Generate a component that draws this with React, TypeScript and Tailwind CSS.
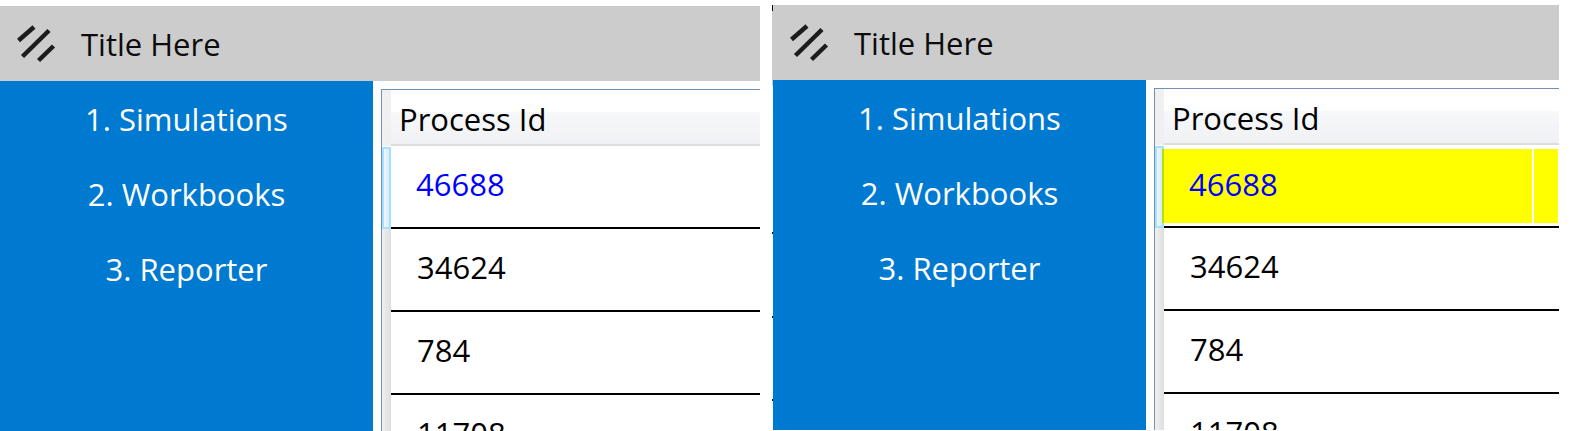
const rows = ['46688', '34624', '784', '11708']
const ticks = [
  { top: 'top-0', height: 'h-[6px]', color: 'bg-black' },
  { top: 'top-[75px]', height: 'h-[6px]', color: 'bg-[#cccccc]' },
  { top: 'top-[227px]', height: 'h-[2px]', color: 'bg-black' },
  { top: 'top-[311px]', height: 'h-[2px]', color: 'bg-black' },
  { top: 'top-[394px]', height: 'h-[2px]', color: 'bg-black' },
]

function TitleIcon() {
  return (
    <svg width="40" height="40" viewBox="0 0 40 40" className="shrink-0">
      <g stroke="#1c1c1c" strokeWidth="4.5" fill="none">
        <path d="M2.5 16.5 L18 3" />
        <path d="M6.5 32.5 L33 6.5" />
        <path d="M22.5 36.5 L37.5 22" />
      </g>
    </svg>
  )
}

function Row({ value, index, highlight }: { value: string; index: number; highlight: boolean }) {
  const first = index === 0
  return (
    <div className="flex h-[83px] shrink-0">
      <div
        className={
          first
            ? 'w-[9px] shrink-0 mt-px border-2 border-[#a6e0ff] bg-gradient-to-r from-[#f4f7fa] to-[#d5ecfb]'
            : 'w-[9px] shrink-0 bg-gradient-to-r from-[#f0f0f0] to-[#dedede]'
        }
      />
      <div className="flex-1 min-w-0 border-b-2 border-black">
        {first && highlight ? (
          <div className="flex h-full pt-[4px] pb-[3px] pr-px -ml-[2px] relative gap-[2px]">
            <div className="w-[370px] shrink-0 bg-[#ffff00] border-l-2 border-[#b8e000] pl-[25px] pb-[4px] flex items-center text-[#0000ff]">
              {value}
            </div>
            <div className="flex-1 bg-[#ffff00]" />
          </div>
        ) : (
          <div className={first ? 'h-full pl-[25px] pb-[4px] flex items-center text-[#0000ff]' : 'h-full pl-[26px] pb-[5px] flex items-center text-black'}>
            {value}
          </div>
        )}
      </div>
    </div>
  )
}

function Panel({ width, top, highlight }: { width: string; top: string; highlight: boolean }) {
  return (
    <div className={`${width} ${top} relative h-[425px] shrink-0 flex flex-col overflow-hidden`}>
      <div className={highlight ? 'h-[75px] shrink-0 bg-[#cccccc] flex items-center pl-[17px] gap-[25px]' : 'h-[75px] shrink-0 bg-[#cccccc] flex items-center pl-[16px] gap-[25px]'}>
        <TitleIcon />
        <span className="text-[#0c0c0c] pt-[1px]">Title Here</span>
      </div>
      <div className={highlight ? 'flex-1 min-h-0 flex pl-px' : 'flex-1 min-h-0 flex'}>
        <div className="w-[373px] shrink-0 bg-[#0079d0] text-white flex flex-col items-center pt-[1px]">
          <div className="h-[75px] flex items-center">1. Simulations</div>
          <div className="h-[75px] flex items-center">2. Workbooks</div>
          <div className="h-[75px] flex items-center">3. Reporter</div>
        </div>
        <div className="flex-1 min-w-0 bg-white pl-[8px] pt-[8px]">
          <div className="h-full border-l border-t border-[#6f93b8] flex flex-col">
            <div className="flex h-[56px] shrink-0">
              <div className="w-[9px] shrink-0 bg-[#f0f0f0]" />
              <div className="flex-1 min-w-0 border-b-2 border-[#dddddd] pl-[8px] pt-[4px] flex items-center bg-[linear-gradient(to_bottom,#ffffff_22px,#f7f8fa_22px,#f0f1f4_100%)]">
                <span className="text-black">Process Id</span>
              </div>
            </div>
            {rows.map((r, i) => (
              <Row key={r} value={r} index={i} highlight={highlight} />
            ))}
          </div>
        </div>
      </div>
      {highlight &&
        ticks.map((t) => (
          <div key={t.top} className={`absolute left-0 w-px ${t.top} ${t.height} ${t.color}`} />
        ))}
    </div>
  )
}

export default function App() {
  return (
    <div className="h-[431px] w-[1592px] bg-white overflow-hidden flex items-start gap-[12px] text-[31px] leading-none font-['Open_Sans','Noto_Sans',sans-serif]">
      <Panel width="w-[760px]" top="mt-[6px]" highlight={false} />
      <Panel width="w-[787px]" top="mt-[5px]" highlight={true} />
    </div>
  )
}
